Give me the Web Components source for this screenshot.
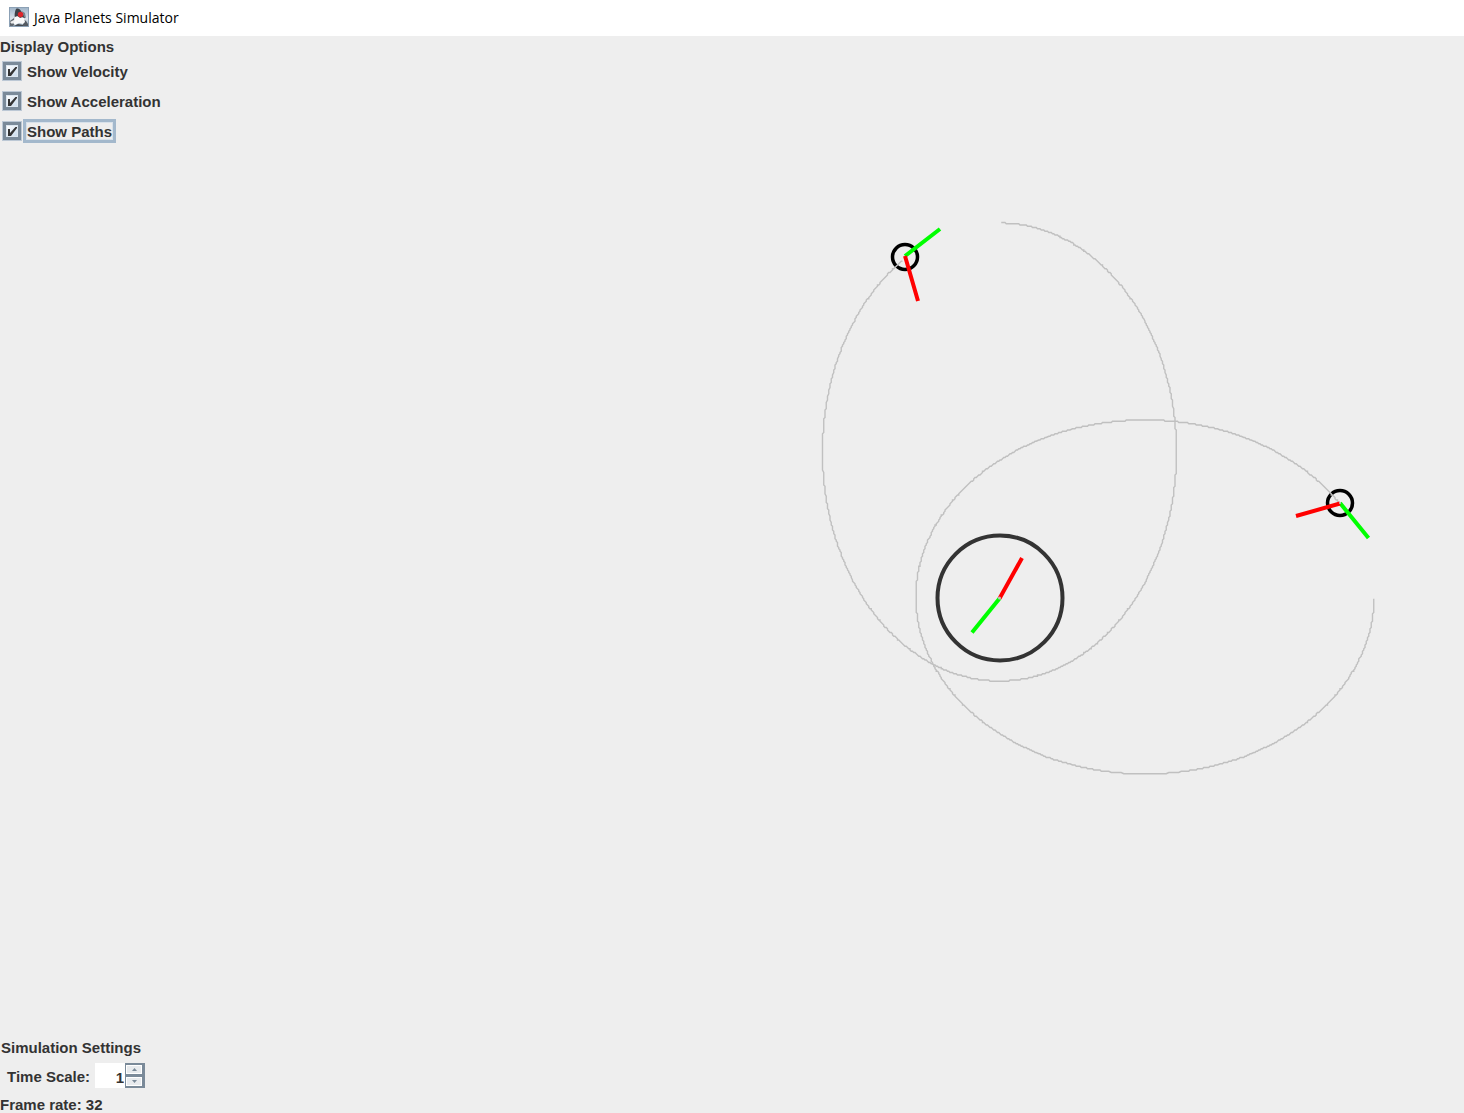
<!DOCTYPE html>
<html lang="en">
<head>
<meta charset="utf-8">
<title>Java Planets Simulator</title>
<style>
html, body { height: 100%; margin: 0; }
body { background: #eee; color: #333; font: bold 15px/18px "Liberation Sans", Arial, sans-serif; }
</style>
</head>
<body>
<planet-window heading="Java Planets Simulator">
  <orbit-canvas slot="scene"></orbit-canvas>
  <option-group slot="top" heading="Display Options">
    <swing-check label="Show Velocity"></swing-check>
    <swing-check label="Show Acceleration"></swing-check>
    <swing-check label="Show Paths" focused></swing-check>
  </option-group>
  <simulation-settings slot="bottom"></simulation-settings>
</planet-window>
<script>
class Base extends HTMLElement {
  constructor() {
    super();
    this.attachShadow({ mode: 'open' });
  }
  connectedCallback() {
    this.shadowRoot.innerHTML = this.render();
  }
}

customElements.define('duke-icon', class extends Base {
  render() {
    return `<style>:host{display:block;width:20px;height:20px}svg{display:block}</style>
    <svg width="20" height="20" viewBox="0 0 20 20" aria-hidden="true">
      <defs><linearGradient id="g" x2="0" y2="1"><stop offset="0" stop-color="#9fb4c8"/><stop offset=".6" stop-color="#dbe3ea"/><stop offset="1" stop-color="#8fa3b4"/></linearGradient></defs>
      <rect x=".5" y=".5" width="19" height="19" fill="url(#g)" stroke="#8ba0b5"/>
      <path d="M1 14l4-3 2 4-3 4H1z" fill="#60676e"/>
      <path d="M14 12l3 2 2 3v2h-5z" fill="#555b62"/>
      <path d="M7 2c2-1 4 0 5 2l3 4 1 3-5 1-5-1c-1-3 0-7 1-9z" fill="#3d4148"/>
      <path d="M13 4l3 2 1 5-2-1z" fill="#7b858f"/>
      <path d="M6 10c2-1 3-1 5 1 2-1 3-1 4 0l1 4-2 2-4-1-4 2-2-2z" fill="#fafafa"/>
      <path d="M1 15l4-2 1 1-3 3z" fill="#eee"/>
      <path d="M5 19l4-2 5 1v1z" fill="#454a50"/>
      <circle cx="11.500" cy="7.500" r="2.700" fill="#dc262b"/>
    </svg>`;
  }
});

customElements.define('planet-window', class extends Base {
  render() {
    return `<style>
      :host{display:flex;flex-direction:column;min-height:100vh}
      header{display:flex;align-items:center;gap:5px;height:36px;padding:0 9px;box-sizing:border-box;background:#fff;color:#000}
      h1{margin:0;font:14px/20px "Open Sans",sans-serif}
      duke-icon{margin-bottom:2px}
      main{flex:1;display:grid;grid-template:minmax(0,1fr)/minmax(0,1fr)}
      ::slotted([slot=scene]),.panel{grid-area:1/1}
      .panel{display:flex;flex-direction:column;justify-content:space-between;align-items:flex-start;z-index:1}
    </style>
    <header><duke-icon></duke-icon><h1>${this.getAttribute('heading')}</h1></header>
    <main><slot name="scene"></slot><div class="panel"><slot name="top"></slot><slot name="bottom"></slot></div></main>`;
  }
});

customElements.define('option-group', class extends Base {
  render() {
    return `<style>
      :host{display:flex;flex-direction:column;align-items:flex-start;padding-top:2px}
      h2{margin:0;font:inherit}
      .list{display:flex;flex-direction:column;align-items:flex-start;gap:6px;padding-top:3px}
    </style><h2>${this.getAttribute('heading')}</h2><div class="list"><slot></slot></div>`;
  }
});

customElements.define('swing-check', class extends Base {
  render() {
    return `<style>
      :host{display:block}
      label{display:flex;align-items:center;height:24px;padding-left:2px}
      .box{display:grid;width:20px;height:20px}
      input,svg{grid-area:1/1;margin:0;width:20px;height:20px}
      input{appearance:none;box-sizing:border-box;border:1px solid #bcc8d5;background:linear-gradient(135deg,#fff 20%,#b8cfe5);box-shadow:inset 0 0 0 3px #7a8a99,inset 0 0 0 4px #dce6ef;outline:0}
      svg{pointer-events:none}
      input:not(:checked)+svg{visibility:hidden}
      .text{box-sizing:border-box;height:24px;margin-left:1px;padding:3px 4px;line-height:20px;white-space:nowrap}
      :host([focused]) .text{padding:0 1px;border:3px solid #a3b8cc;box-shadow:inset 0 0 0 1px #d8e1ea}
    </style>
    <label><span class="box"><input type="checkbox" checked><svg viewBox="0 0 20 20" aria-hidden="true"><path d="M6 8h2v4l5.500-6H15v1l-6 8H6z" fill="#333"/></svg></span><span class="text">${this.getAttribute('label')}</span></label>`;
  }
});

customElements.define('simulation-settings', class extends Base {
  render() {
    return `<style>
      :host{display:flex;flex-direction:column;align-items:flex-start}
      h2{margin:0;padding-left:1px;font:inherit}
      .row{display:flex;align-items:center;gap:5px;height:25px;padding:6px 0 8px 7px}
      .row label{padding-top:3px}
      .spin{display:flex;height:25px}
      input{appearance:textfield;box-sizing:border-box;width:30px;height:25px;margin:0;border:0;padding:3px 1px 0 0;background:#fff;color:inherit;font:inherit;text-align:right;outline:0;border-radius:0}
      input::-webkit-inner-spin-button{appearance:none;margin:0}
      .arrows{display:flex;flex-direction:column;gap:3px;box-sizing:border-box;width:20px;height:25px;padding:2px 3px 2px 1px;background:#7a8a99}
      button{flex:1;display:grid;place-items:center;min-height:0;padding:0;border:1px solid #fff;border-radius:0;background:#e8ebee}
      svg{display:block}
      p{margin:0;height:17px}
    </style>
    <h2>Simulation Settings</h2>
    <div class="row"><label for="scale">Time Scale:</label><div class="spin"><input id="scale" type="number" value="1"><div class="arrows">
      <button type="button" aria-label="Increase"><svg width="5" height="3"><path d="M0 3 2.500 0 5 3z" fill="#7a8a99"/></svg></button>
      <button type="button" aria-label="Decrease"><svg width="5" height="3"><path d="M0 0 2.500 3 5 0z" fill="#7a8a99"/></svg></button>
    </div></div></div>
    <p>Frame rate: 32</p>`;
  }
  connectedCallback() {
    super.connectedCallback();
    const root = this.shadowRoot, input = root.querySelector('input');
    const [up, down] = root.querySelectorAll('button');
    up.onclick = () => input.stepUp();
    down.onclick = () => input.stepDown();
  }
});

customElements.define('orbit-canvas', class extends Base {
  // A trail snapped to a coarse grid, clockwise from angle a to angle b (degrees).
  trail(cx, cy, rx, ry, a, b) {
    const pts = [], snap = v => Math.round(v / 1.25) * 1.25;
    for (let t = a; t <= b; t += 0.4) {
      const r = t * Math.PI / 180;
      pts.push(snap(cx + rx * Math.cos(r)) + ',' + snap(cy + ry * Math.sin(r)));
    }
    return `<polyline points="${pts.join(' ')}"/>`;
  }
  render() {
    return `<style>:host{display:block;min-width:0;min-height:0}svg{display:block;width:100%;height:100%}</style>
    <svg viewBox="0 36 1464 1077" fill="none" role="img" aria-label="Orbits">
      <g stroke="#000" stroke-width="3.5"><circle cx="905" cy="257" r="12.5"/><circle cx="1340" cy="503" r="12.5"/><circle cx="1000" cy="598" r="62.5" stroke="#333" stroke-width="4"/></g>
      <g stroke="#c0c0c0" stroke-width="1.4">${this.trail(999.5, 452, 177, 229, -89.4, 237)}${this.trail(1145, 597, 229, 177, 0.6, 328)}</g>
      <g stroke="#0f0" stroke-width="4"><path d="M905 256 940 229M1340 503l28.500 35M999.500 598.500 972 632.500"/></g>
      <g stroke="#f00" stroke-width="4"><path d="M905 256 918 301M1340 503.500 1296 516M999.500 598.500 1022 558"/></g>
      <g fill="#c0c0c0"><circle cx="999.500" cy="598" r="1.500"/><circle cx="1340" cy="503" r="1"/></g>
    </svg>`;
  }
});
</script>
</body>
</html>
